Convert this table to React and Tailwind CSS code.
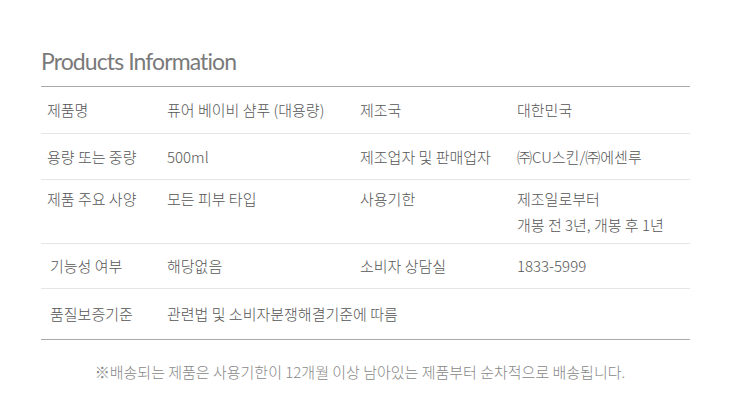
import React from "react";

const font = { fontFamily: '"Noto Sans CJK KR", "Noto Sans", sans-serif' };

function Row({ h, align = "items-center", pt = "", cells, last }) {
  return (
    <div className={`grid grid-cols-[120px_193px_157px_179px] ${h} ${last ? "" : "border-b border-[#e6e6e6]"}`}>
      {cells.map((c, i) => (
        <div key={i} className={`flex ${align} ${pt} pl-[6px] ${c.span ? "col-span-3" : ""}`}>
          <div className="leading-[26px]">{c.t}</div>
        </div>
      ))}
    </div>
  );
}

export default function App() {
  return (
    <div className="w-[740px] h-[410px] bg-white text-[#555] font-light" style={font}>
      <div className="pl-[41px] pt-[45px] h-[86px] text-[23px] leading-[32px] tracking-[-0.9px] text-[#7a7a7a] font-normal" style={{ fontFamily: 'Lato, sans-serif' }}>
        Products Information
      </div>
      <div className="mx-[41px] w-[649px] border-t border-b border-[#a9a9a9] text-[15px]">
        <Row h="h-[47px]" cells={[{ t: "제품명" }, { t: "퓨어 베이비 샴푸 (대용량)" }, { t: "제조국" }, { t: "대한민국" }]} />
        <Row h="h-[46px]" cells={[{ t: "용량 또는 중량" }, { t: "500ml" }, { t: "제조업자 및 판매업자" }, { t: "㈜CU스킨/㈜에센루" }]} />
        <Row
          h="h-[64px]"
          align="items-start"
          pt="pt-[6px]"
          cells={[
            { t: "제품 주요 사양" },
            { t: "모든 피부 타입" },
            { t: "사용기한" },
            { t: (<>제조일로부터<br />개봉 전 3년, 개봉 후 1년</>) },
          ]}
        />
        <Row h="h-[45px]" cells={[{ t: <span className="pl-[3px]">기능성 여부</span> }, { t: "해당없음" }, { t: "소비자 상담실" }, { t: "1833-5999" }]} />
        <Row h="h-[50px]" last cells={[{ t: <span className="pl-[3px]">품질보증기준</span> }, { t: "관련법 및 소비자분쟁해결기준에 따름", span: true }]} />
      </div>
      <div className="text-center text-[15px] text-[#888] mt-[19px] pr-[20px] leading-[26px]">
        ※배송되는 제품은 사용기한이 12개월 이상 남아있는 제품부터 순차적으로 배송됩니다.
      </div>
    </div>
  );
}
